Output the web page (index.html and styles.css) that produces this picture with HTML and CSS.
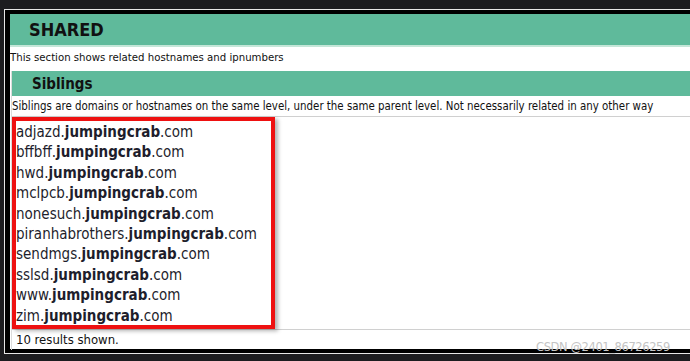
FILE: index.html
```html
<!DOCTYPE html>
<html lang="en">
<head>
    <meta charset="UTF-8">
    <meta name="viewport" content="width=device-width, initial-scale=1.0">
    <title>Shared - Siblings</title>
    <link rel="stylesheet" href="styles.css">
</head>
<body>
    <div class="frame">
        <div class="panel">
            <h1 class="section-title">SHARED</h1>
            <p class="section-desc">This section shows related hostnames and ipnumbers</p>

            <div class="subsection">
                <h2 class="sub-title">Siblings</h2>
                <p class="sub-desc">Siblings are domains or hostnames on the same level, under the same parent level. Not necessarily related in any other way</p>

                <div class="list-box">
                    <ul class="host-list">
                        <li>adjazd.<b>jumpingcrab</b>.com</li>
                        <li>bffbff.<b>jumpingcrab</b>.com</li>
                        <li>hwd.<b>jumpingcrab</b>.com</li>
                        <li>mclpcb.<b>jumpingcrab</b>.com</li>
                        <li>nonesuch.<b>jumpingcrab</b>.com</li>
                        <li>piranhabrothers.<b>jumpingcrab</b>.com</li>
                        <li>sendmgs.<b>jumpingcrab</b>.com</li>
                        <li>sslsd.<b>jumpingcrab</b>.com</li>
                        <li>www.<b>jumpingcrab</b>.com</li>
                        <li>zim.<b>jumpingcrab</b>.com</li>
                    </ul>
                </div>

                <div class="results">10 results shown.</div>
            </div>
        </div>
    </div>
    <div class="watermark">CSDN @2401_86726259</div>
</body>
</html>
```

FILE: styles.css
```css
body {
    margin: 0;
    padding: 9px 0 0 4px;
    background: #1c1c1f;
    font-family: "DejaVu Sans Condensed", "DejaVu Sans", sans-serif;
    color: #111;
    overflow: hidden;
}
.frame {
    border: 1px solid #e6e6e6;
    border-right: none;
}
.panel {
    background: #fff;
    border-top: 4px solid #000;
    border-left: 5px solid #000;
    border-bottom: 4px solid #000;
    height: 335px;
}
.section-title {
    margin: 0;
    background: #5fba9b;
    border-bottom: 2px solid #c4e6d8;
    height: 31px;
    padding-left: 19px;
    font-size: 18px;
    line-height: 32px;
    font-weight: bold;
}
.section-desc {
    margin: 0;
    height: 24px;
    font-size: 11.3px;
    line-height: 22px;
}
.subsection {
    margin-left: 1px;
    border-left: 1px solid #dcdcdc;
}
.sub-title {
    margin: 0;
    background: #5fba9b;
    height: 25px;
    padding-left: 20px;
    font-size: 15px;
    line-height: 26px;
    font-weight: bold;
}
.sub-desc {
    margin: 0;
    height: 20px;
    font-size: 11.4px;
    line-height: 21px;
    border-bottom: 1px solid #d0d0d0;
    white-space: nowrap;
}
.list-box {
    border-bottom: 1px solid #d0d0d0;
}
.host-list {
    list-style: none;
    margin: 0;
    padding: 1px 0 0 0;
    height: 203px;
    width: 255px;
    border: 4px solid #ee1111;
    box-shadow: 3px 2px 4px rgba(0, 0, 0, 0.3);
    font-size: 15px;
    line-height: 20.4px;
    color: #1e1e2c;
}
.host-list b {
    font-weight: bold;
}
.results {
    padding-left: 4px;
    font-size: 13px;
    line-height: 20px;
}
.watermark {
    position: absolute;
    left: 536px;
    top: 340px;
    font-family: "DejaVu Sans", sans-serif;
    font-size: 11.5px;
    color: #c4c4c4;
    letter-spacing: -0.4px;
}
```
